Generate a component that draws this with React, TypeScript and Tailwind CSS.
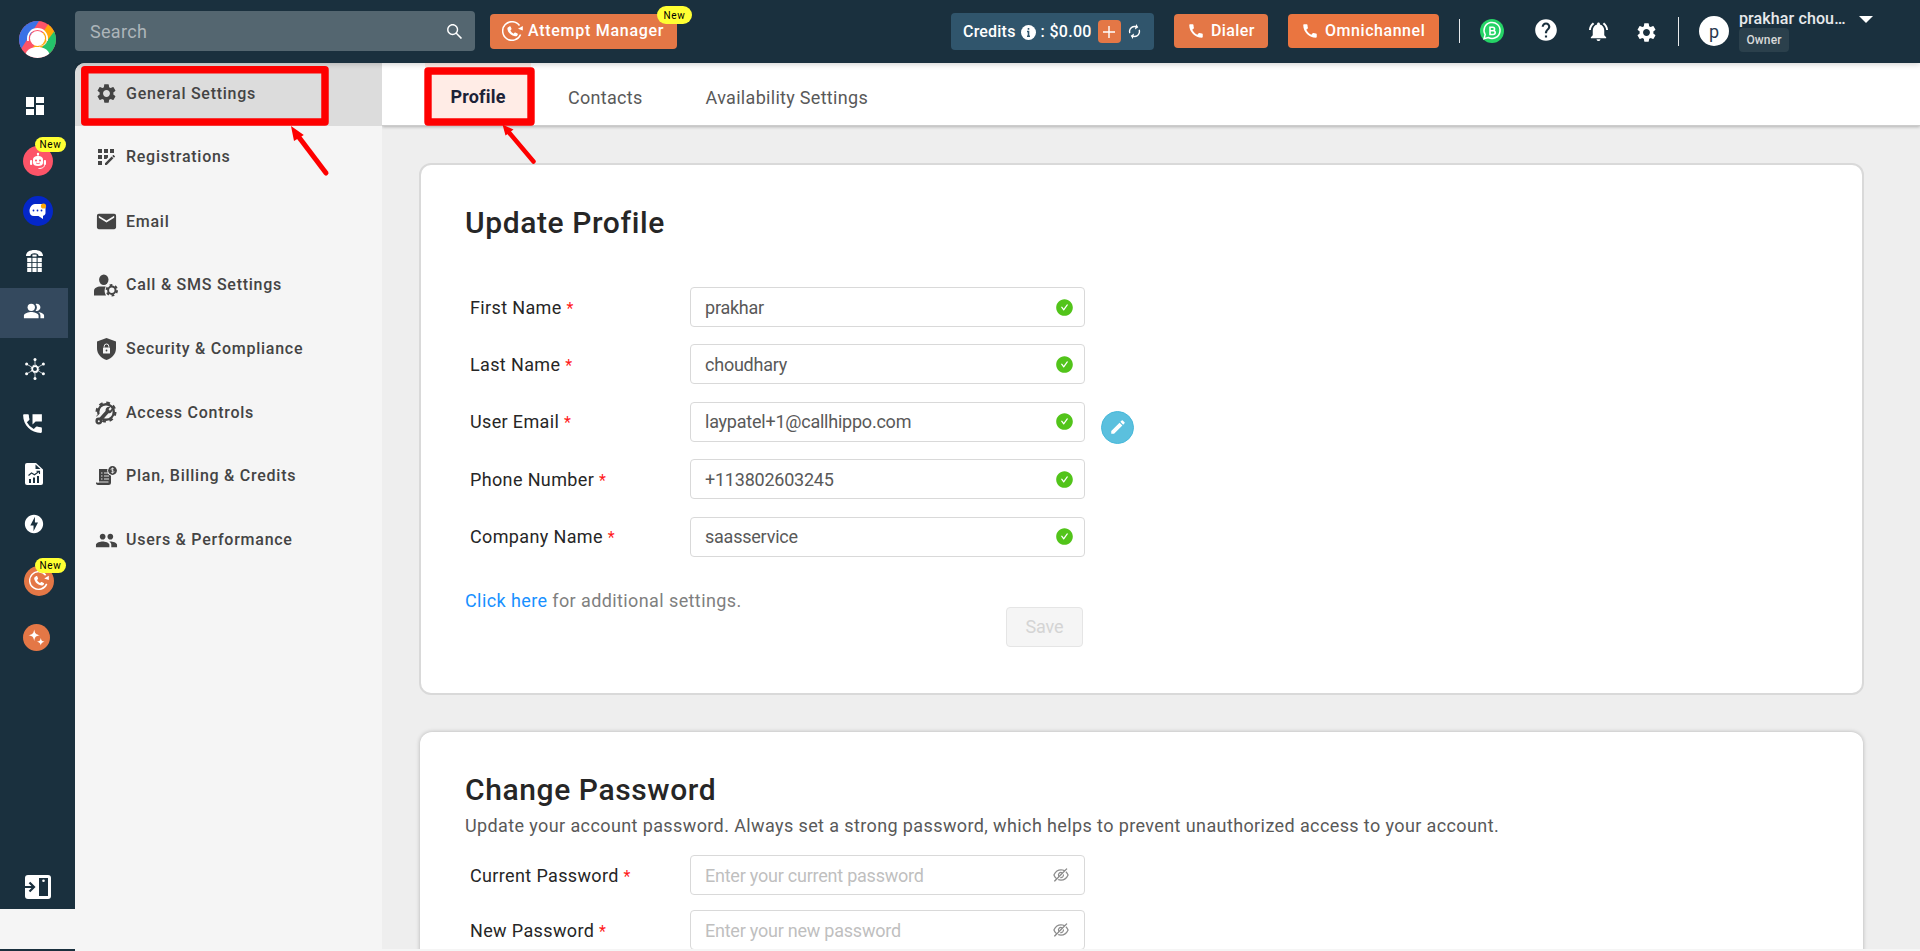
import { ReactNode } from 'react';
import {
  MdAppRegistration,
  MdAutorenew,
  MdCall,
  MdDashboard,
  MdEdit,
  MdEmail,
  MdHelp,
  MdNotificationsActive,
  MdOfflineBolt,
  MdPeople,
  MdPeopleAlt,
  MdPermPhoneMsg,
  MdSettings,
} from 'react-icons/md';
import { AiFillCheckCircle, AiOutlineEyeInvisible, AiOutlineSearch } from 'react-icons/ai';

interface MenuItem {
  label: string;
  icon: ReactNode;
}

interface FieldProps {
  label: string;
  value?: string;
  placeholder?: string;
  action?: ReactNode;
}

function LogoIcon() {
  return (
    <svg width="37" height="37" viewBox="0 0 37 37">
      <defs>
        <clipPath id="logo">
          <circle cx="18.5" cy="18.5" r="18.5" />
        </clipPath>
      </defs>
      <g clipPath="url(#logo)">
        <rect width="37" height="37" fill="#fd5468" />
        <path d="M0 0h20L2 28H0z" fill="#3b72e6" />
        <path d="M30 2L13 28h10L37 10z" fill="#ffa90a" />
        <path d="M37 8L22 28l10 9 5-4z" fill="#24c26a" />
        <path d="M6 34c2-6 7-8 12.500-8s10.500 2 12.500 8l-5 4H11z" fill="#fff" />
        <path d="M9 20c-1-8 4-12 9.500-12S29 12 28 20" fill="none" stroke="#fff" strokeWidth="1.800" />
        <circle cx="18.500" cy="17.500" r="7.500" fill="#fff" />
        <path d="M28 19c-1 5-4 6-8 6" fill="none" stroke="#ffd9a0" strokeWidth="1.200" />
      </g>
    </svg>
  );
}

function RobotIcon() {
  return (
    <svg width="16" height="18" viewBox="0 0 16 18">
      <path d="M8 1v4" stroke="#fff" strokeWidth="1" />
      <circle cx="8" cy="2" r="1.200" fill="#fff" />
      <path d="M3 8c0-3 2-4 5-4s5 1 5 4v3c0 2-2 3-5 3s-5-1-5-3z" fill="#fff" />
      <rect x="0" y="8" width="2.200" height="5" rx="1" fill="#fff" />
      <rect x="13.800" y="8" width="2.200" height="5" rx="1" fill="#fff" />
      <circle cx="6" cy="8.500" r="1" fill="#fd5468" />
      <circle cx="10" cy="8.500" r="1" fill="#fd5468" />
      <path d="M6 11q2 1.500 4 0" stroke="#fd5468" strokeWidth=".8" fill="none" />
      <path d="M14.500 13c0 2-2 3.500-6 3.500" stroke="#fff" strokeWidth="1" fill="none" />
    </svg>
  );
}

function ChatIcon() {
  return (
    <svg width="18" height="18" viewBox="0 0 18 18">
      <path d="M6 2h7c2 0 3.500 2 3.500 4v5c0 1.500-1 2.500-2.500 2.800V17l-4.500-3H5c-3 0-4.500-2-4.500-5s2-7 5.500-7z" fill="#fff" />
      <circle cx="14.500" cy="4" r="2.600" fill="#ffa90a" />
      <circle cx="4.500" cy="8.500" r=".9" fill="#0427c9" />
      <circle cx="8.500" cy="8.500" r=".9" fill="#0427c9" />
      <circle cx="12.500" cy="8.500" r=".9" fill="#0427c9" />
    </svg>
  );
}

function DialpadIcon() {
  return (
    <svg width="17" height="22" viewBox="0 0 17 22" fill="#fff">
      <path d="M0 6C0 2 3.500 0 8.500 0S17 2 17 6H12.500C12.500 4 11 3.200 8.500 3.200S4.500 4 4.500 6z" />
      {[7.8, 12.8, 17.8].map((y) =>
        [1.2, 6.4, 11.6].map((x) => <rect key={`${x}-${y}`} x={x} y={y} width="4.200" height="4.200" />),
      )}
      <rect x="6.400" y="4.600" width="4.200" height="2" />
    </svg>
  );
}

function HubIcon() {
  return (
    <svg width="20" height="22" viewBox="0 0 20 22">
      <path d="M10 1.500v19M1.500 6l17 10M18.500 6l-17 10" stroke="#fff" strokeWidth=".7" />
      <circle cx="10" cy="11" r="2.800" fill="#1a303e" stroke="#fff" strokeWidth="1.700" />
      <circle cx="10" cy="11" r="3.900" fill="none" stroke="#fff" strokeWidth=".9" strokeDasharray="1.600 1.460" />
      <g fill="#fff">
        <circle cx="10" cy="1.600" r="1.500" />
        <circle cx="10" cy="20.400" r="1.500" />
        <circle cx="1.600" cy="6" r="1.500" />
        <circle cx="18.400" cy="6" r="1.500" />
        <circle cx="1.600" cy="15.800" r="1.500" />
        <circle cx="18.400" cy="15.800" r="1.500" />
      </g>
    </svg>
  );
}

function ReportIcon() {
  return (
    <svg width="18" height="22" viewBox="0 0 18 22">
      <path d="M2 0h9l7 6.500V20a2 2 0 0 1-2 2H2a2 2 0 0 1-2-2V2a2 2 0 0 1 2-2z" fill="#fff" />
      <path d="M10.500 1.500V6h5z" fill="#1a303e" />
      <path d="M4 16h2v4H4zM8 14.500h2V20H8zM12 13h2v7h-2z" fill="#1a303e" />
      <path d="M3.500 12.500l3-2.500 3 1.800L14 8.500M11.500 8.300H14.500V11" fill="none" stroke="#1a303e" strokeWidth="1.100" />
    </svg>
  );
}

function RedialIcon({ size = 21 }: { size?: number }) {
  return (
    <svg width={size} height={size} viewBox="0 0 21 21">
      <path d="M18.600 13.500A9.300 9.300 0 1 1 17.500 4.500" fill="none" stroke="#fff" strokeWidth="1.500" />
      <path d="M20.800 5v4.500l-4.800-1.700z" fill="#fff" />
      <path
        d="M6.200 6.200l1.500-.9c.4-.2.800 0 1 .4l.8 2c.1.400 0 .7-.2.900l-.9.900c.8 1.500 1.800 2.500 3.200 3.200l.9-.9c.3-.3.600-.3.900-.2l2 .9c.4.200.5.600.4.900-.4 1.400-1.300 2-2.800 1.800C8.500 14.400 6 11.500 5.400 8c-.1-.8.200-1.500.8-1.800z"
        fill="#fff"
      />
    </svg>
  );
}

function SparkleIcon() {
  return (
    <svg width="17" height="17" viewBox="0 0 17 17" fill="#fff">
      <path d="M6.200.5c.7 4 1.700 5 5.700 5.800-4 .7-5 1.700-5.700 5.700C5.500 8 4.500 7 .5 6.300 4.500 5.500 5.500 4.500 6.200.5z" />
      <path d="M12.800 9c.4 2.500 1.200 3.300 3.700 3.700-2.500.5-3.300 1.300-3.700 3.800-.5-2.500-1.300-3.300-3.800-3.800 2.500-.4 3.300-1.200 3.800-3.700z" />
    </svg>
  );
}

function CollapseIcon() {
  return (
    <svg width="26" height="24" viewBox="0 0 26 24">
      <rect width="26" height="24" rx="3" fill="#fff" />
      <rect x="14" y="3" width="9" height="18" fill="#1a303e" />
      <circle cx="18.500" cy="5.800" r="1.300" fill="#fff" />
      <path d="M0 12h8M4.500 7.500L9 12l-4.500 4.500" fill="none" stroke="#1a303e" strokeWidth="2.200" />
    </svg>
  );
}

function UserGearIcon() {
  return (
    <svg width="24" height="23" viewBox="0 0 24 23" fill="#444">
      <ellipse cx="9.800" cy="5.700" rx="4.700" ry="5.200" />
      <path d="M0 21.500v-4.300C0 14 3 12.500 6.500 12.500h5.200c-1.600 2.700-1.500 6.300.3 9z" />
      <circle cx="17.800" cy="16.300" r="3.700" fill="none" stroke="#444" strokeWidth="2" />
      <circle cx="17.800" cy="16.300" r="5.200" fill="none" stroke="#444" strokeWidth="2" strokeDasharray="2.720 2.720" />
    </svg>
  );
}

function ShieldLockIcon() {
  return (
    <svg width="19" height="22" viewBox="0 0 19 22">
      <path d="M9.500 0L19 3.500V10c0 6-4 10-9.500 12C4 20 0 16 0 10V3.500z" fill="#444" />
      <path d="M7.200 9.500V8.300a2.300 2.300 0 0 1 4.600 0v1.200" fill="none" stroke="#f5f5f5" strokeWidth="1" />
      <rect x="6" y="9.500" width="7" height="6" rx=".6" fill="#f5f5f5" />
      <circle cx="9.500" cy="12.500" r=".9" fill="#444" />
    </svg>
  );
}

function AccessIcon() {
  return (
    <svg width="22" height="24" viewBox="0 0 22 24">
      <circle cx="11" cy="11" r="7.800" fill="none" stroke="#444" strokeWidth="2.400" />
      <circle cx="11" cy="11" r="9.400" fill="none" stroke="#444" strokeWidth="2.200" strokeDasharray="3.700 3.680" />
      <path d="M2.500 19L10 11.500" stroke="#f5f5f5" strokeWidth="6" />
      <path d="M4 20L13 10" stroke="#444" strokeWidth="3.600" strokeLinecap="round" />
      <path d="M10.500 9.500c0-3 2.500-4.500 5-3.500l-2.500 2.700 1.500 1.500 2.500-2.700c1 2.500-.8 5-3.500 4.800z" fill="#444" />
      <circle cx="3.800" cy="20" r="3.400" fill="#444" />
      <circle cx="3.800" cy="20.200" r="1" fill="#f5f5f5" />
    </svg>
  );
}

function BillingIcon() {
  return (
    <svg width="21" height="20" viewBox="0 0 21 20">
      <path d="M3 3h12v13.500A2.500 2.500 0 0 1 12.500 19H2a2 2 0 0 1-2-2.500h3z" fill="#444" />
      <path d="M5 7h1.500M8 7h5M5 10h1.500M8 10h5M5 13h1.500M8 13h5M1 16h11.500" stroke="#f5f5f5" strokeWidth=".9" />
      <circle cx="16.500" cy="4.500" r="5.300" fill="#f5f5f5" />
      <circle cx="16.500" cy="4.500" r="4.400" fill="#444" />
      <path d="M18 3c-1-1-3-.8-3 .3 0 1.500 3 .9 3 2.400 0 1.100-2 1.300-3 .3M16.500 1.500v6" fill="none" stroke="#f5f5f5" strokeWidth=".7" />
    </svg>
  );
}

function WhatsappBusinessIcon() {
  return (
    <svg width="24" height="24" viewBox="0 0 24 24" fill="none">
      <circle cx="12" cy="12" r="12" fill="#25d366" />
      <path d="M4 19.700l1.200-4.100A8 8 0 1 1 8.300 18.500z" stroke="#fff" strokeWidth="1.500" />
      <path d="M10 8.200h2.800a1.700 1.700 0 0 1 0 3.500H10zM10 11.700h3.300a1.900 1.900 0 0 1 0 3.800H10z" stroke="#fff" strokeWidth="1.600" />
    </svg>
  );
}

const menu: MenuItem[] = [
  { label: 'General Settings', icon: <MdSettings size={23} /> },
  { label: 'Registrations', icon: <MdAppRegistration size={24} /> },
  { label: 'Email', icon: <MdEmail size={23} /> },
  { label: 'Call & SMS Settings', icon: <UserGearIcon /> },
  { label: 'Security & Compliance', icon: <ShieldLockIcon /> },
  { label: 'Access Controls', icon: <AccessIcon /> },
  { label: 'Plan, Billing & Credits', icon: <BillingIcon /> },
  { label: 'Users & Performance', icon: <MdPeople size={23} /> },
];

function NewBadge({ className }: { className: string }) {
  return (
    <span className={`absolute flex items-center justify-center rounded-full bg-[#ffff33] text-black ${className}`}>
      New
    </span>
  );
}

function Rail() {
  return (
    <nav className="flex h-[909px] w-[75px] shrink-0 flex-col bg-[#1a303e] text-white">
      <div className="flex h-[78px] items-center justify-center">
        <LogoIcon />
      </div>
      <div className="flex h-14 w-[70px] items-center justify-center">
        <MdDashboard size={24} />
      </div>
      <div className="flex h-[54px] items-center pl-[23px]">
        <div className="relative flex size-[30px] items-center justify-center rounded-full bg-[#fd5468]">
          <RobotIcon />
          <NewBadge className="-top-[9px] left-3 h-[15px] w-[31px] text-[10px] tracking-[0.7px]" />
        </div>
      </div>
      <div className="flex h-[46px] items-center pl-[23px]">
        <div className="flex size-[30px] items-center justify-center rounded-full bg-[#0427c9]">
          <ChatIcon />
        </div>
      </div>
      <div className="flex h-[54px] w-[68px] items-center justify-center">
        <DialpadIcon />
      </div>
      <div className="flex h-[50px] w-[68px] items-center justify-center bg-[#34495e] pb-1">
        <MdPeopleAlt size={22} />
      </div>
      <div className="flex h-[62px] w-[70px] items-center justify-center">
        <HubIcon />
      </div>
      <div className="flex h-[46px] w-[65px] items-center justify-center">
        <MdPermPhoneMsg size={25} />
      </div>
      <div className="flex h-14 w-[68px] items-center justify-center">
        <ReportIcon />
      </div>
      <div className="flex h-11 w-[68px] items-center justify-center">
        <MdOfflineBolt size={22} />
      </div>
      <div className="flex h-[70px] items-center pl-6">
        <div className="relative flex size-[30px] items-center justify-center rounded-full bg-[#e47746]">
          <RedialIcon size={20} />
          <NewBadge className="-top-2 left-[11px] h-[15px] w-[31px] text-[10px] tracking-[0.7px]" />
        </div>
      </div>
      <div className="flex h-[42px] items-center pl-[23px]">
        <div className="flex size-[27px] items-center justify-center rounded-full bg-[#e47746]">
          <SparkleIcon />
        </div>
      </div>
      <div className="mt-auto mb-[10px] flex justify-center">
        <CollapseIcon />
      </div>
    </nav>
  );
}

function Header() {
  return (
    <header className="relative z-10 flex h-[63px] w-full shrink-0 items-start bg-[#1a303e] text-white shadow-[0_1px_6px_rgba(0,0,0,0.2)]">
      <div className="mt-[11px] flex h-10 w-[400px] items-center justify-between rounded bg-[#546670] pr-[11px] pl-[15px]">
        <span className="text-[18px] tracking-[0.3px] text-[#adb5ba]">Search</span>
        <AiOutlineSearch size={19} />
      </div>
      <div className="relative mt-[14px] ml-[15px] flex h-[35px] w-[187px] items-center rounded bg-[#e47746] pl-3">
        <RedialIcon />
        <span className="ml-[5px] pb-px text-[16px] font-medium tracking-[0.72px] whitespace-nowrap">Attempt Manager</span>
        <NewBadge className="-top-2 -right-[15px] h-[18px] w-[35px] text-[10px] tracking-[0.7px]" />
      </div>
      <div className="mt-[13px] ml-[274px] flex h-[37px] w-[203px] items-center rounded bg-[#30556c] pl-3 text-[16px] font-medium">
        <span className="tracking-[0.2px]">Credits</span>
        <svg className="mt-[1px] ml-[5px]" width="15" height="15" viewBox="0 0 15 15">
          <circle cx="7.500" cy="7.500" r="7.500" fill="#fff" />
          <path d="M7.500 3v1.800M6 6.500h1.500V11M6 11.300h3" fill="none" stroke="#30556c" strokeWidth="1.600" />
        </svg>
        <span className="ml-[5px] tracking-[0.3px] whitespace-pre">: $0.00</span>
        <div className="ml-[6px] flex size-[23px] items-center justify-center rounded bg-[#e47746]">
          <svg width="12" height="12" viewBox="0 0 12 12" stroke="#fff" strokeWidth="1.400">
            <path d="M6 0v12M0 6h12" />
          </svg>
        </div>
        <MdAutorenew className="ml-[5px] rotate-12" size={17} />
      </div>
      <div className="mt-[14px] ml-5 flex h-[34px] w-[94px] items-center rounded bg-[#e47746] pl-[13px]">
        <MdCall size={18} />
        <span className="ml-[6px] text-[16px] font-medium tracking-[0.4px]">Dialer</span>
      </div>
      <div className="mt-[14px] ml-5 flex h-[34px] w-[151px] items-center rounded bg-[#ea7540] pl-[13px]">
        <MdCall size={18} />
        <span className="ml-[6px] text-[16px] font-medium tracking-[0.55px]">Omnichannel</span>
      </div>
      <div className="mt-[19px] ml-5 h-6 w-px bg-white/90" />
      <div className="mt-[19px] ml-5">
        <WhatsappBusinessIcon />
      </div>
      <MdHelp className="mt-[17px] ml-[29px]" size={26} />
      <MdNotificationsActive className="mt-5 ml-[28px]" size={23} />
      <MdSettings className="mt-[21px] ml-[25px]" size={23} />
      <div className="mt-[17px] ml-[20px] h-[29px] w-px bg-white/90" />
      <div className="mt-4 ml-5 flex size-[30px] items-center justify-center rounded-full bg-white text-[18px] text-[#2a3850]">
        p
      </div>
      <div className="ml-[10px] w-[118px]">
        <div className="mt-[7px] h-5 text-[16px] leading-6 font-medium tracking-[0.12px] whitespace-nowrap text-white/90">prakhar chou…</div>
        <div className="mt-px flex h-6 w-[50px] items-center justify-center rounded bg-[#2b404c] text-[12px] font-medium tracking-[0.1px] text-[#d9d9d9]">
          Owner
        </div>
      </div>
      <svg className="mt-4 ml-[2px]" width="14" height="7" viewBox="0 0 14 7" fill="#fff">
        <path d="M0 0h14L7 7z" />
      </svg>
    </header>
  );
}

function SettingsMenu() {
  return (
    <aside className="h-full w-[307px] shrink-0 overflow-hidden rounded-tl-[10px] bg-[#f5f5f5]">
      {menu.map((item, index) => (
        <div
          key={item.label}
          className={`flex items-center pl-[19px] text-[#444] ${index === 0 ? 'h-[63px] bg-[#dcdcdc] pb-[2px]' : index === 1 ? 'h-[64.8px] pb-[2px]' : 'h-[63.7px] pb-[2px]'}`}
        >
          <span className="flex w-6 justify-center">{item.icon}</span>
          <span className="ml-2 text-[16px] font-medium tracking-[0.74px] whitespace-nowrap">{item.label}</span>
        </div>
      ))}
    </aside>
  );
}

function Field({ label, value, placeholder, action }: FieldProps) {
  return (
    <div className="flex h-10 items-center">
      <label className="w-[220px] text-[18px] tracking-[0.36px] text-[#262626]">
        {label} <span className="text-[16px] text-[#ff1a1a]">*</span>
      </label>
      <div className="flex h-10 w-[395px] items-center justify-between rounded border border-[#d9d9d9] bg-white pr-[10px] pl-[14px] text-[18px] tracking-[-0.23px]">
        {value ? <span className="text-[#595959]">{value}</span> : <span className="text-[#bfbfbf]">{placeholder}</span>}
        {value ? (
          <AiFillCheckCircle size={19} className="text-[#52c41a]" />
        ) : (
          <AiOutlineEyeInvisible size={18} className="mr-[4px] text-[#8c8c8c]" />
        )}
      </div>
      {action}
    </div>
  );
}

function EditButton() {
  return (
    <button className="mt-[11px] ml-4 flex size-[33px] items-center justify-center rounded-full border border-[#46b8da] bg-[#5bc0de] text-white">
      <MdEdit size={18} />
    </button>
  );
}

function Annotations() {
  return (
    <svg className="pointer-events-none absolute top-0 left-0 z-20" width="600" height="200" viewBox="0 0 600 200" fill="none">
      <g stroke="#fe0000" strokeLinejoin="round" strokeLinecap="round">
        <rect x="84.800" y="69.800" width="240.200" height="52.200" strokeWidth="7.500" />
        <rect x="428" y="71" width="103" height="51" strokeWidth="7.400" />
        <path d="M298 136L326 173" strokeWidth="5" />
        <path d="M509 132.500L533.500 161.500" strokeWidth="4.500" />
      </g>
      <path d="M291 126l12.800 9-9.800 6zM502.500 124.500l11 5-8 6z" fill="#fe0000" />
    </svg>
  );
}

export default function App() {
  return (
    <div className="relative flex h-[951px] w-[1920px] overflow-hidden bg-[#f5f5f5] font-['Roboto',sans-serif] leading-normal">
      <div className="relative z-20 flex h-full w-[75px] shrink-0 flex-col justify-between">
        <Rail />
        <div className="h-[2px] bg-[#1a303e]" />
      </div>
      <div className="flex h-[949px] w-[1845px] flex-col">
        <Header />
        <div className="flex h-[886px] bg-[linear-gradient(90deg,#1a303e_20px,#eee_20px)]">
          <SettingsMenu />
          <main className="flex h-full w-[1538px] flex-col overflow-hidden bg-[#eee]">
            <div className="flex h-[63px] shrink-0 items-stretch border-b border-[#ccc] bg-white pl-[43px] text-[18px] text-[#595959] shadow-[0_1px_3px_rgba(0,0,0,0.25)]">
              <div className="flex w-[106px] items-center justify-center bg-[#ffece6] pt-1 font-bold tracking-[0.2px] text-[#1c2237]">Profile</div>
              <div className="flex items-center pt-[6px] pl-[37px] tracking-[0.3px]">Contacts</div>
              <div className="flex items-center pt-[6px] pl-[63px] tracking-[0.3px]">Availability Settings</div>
            </div>
            <section className="mt-[37px] ml-[37px] h-[532px] w-[1445px] shrink-0 rounded-xl border-2 border-[#d9d9d9] bg-white pl-11">
              <h2 className="mt-[35px] h-[45px] text-[30px] font-medium tracking-[0.6px] text-[#262626]">Update Profile</h2>
              <div className="mt-[42px] flex flex-col gap-[17.4px] pl-[5px]">
                <Field label="First Name" value="prakhar" />
                <Field label="Last Name" value="choudhary" />
                <Field label="User Email" value="laypatel+1@callhippo.com" action={<EditButton />} />
                <Field label="Phone Number" value="+113802603245" />
                <Field label="Company Name" value="saasservice" />
              </div>
              <div className="mt-[30px] flex w-[618px] items-start justify-between text-[18px]">
                <p className="tracking-[0.4px] text-[#7f7f7f]">
                  <a className="text-[#1890ff]">Click here</a> for additional settings.
                </p>
                <button className="mt-5 h-10 w-[77px] rounded border border-[#e5e5e5] bg-[#f5f5f5] tracking-[-0.1px] text-[#d4d4d4]">Save</button>
              </div>
            </section>
            <section className="mt-[37px] ml-[38px] h-[400px] w-[1443px] shrink-0 rounded-xl bg-white pl-[45px] shadow-[0_0_4px_rgba(0,0,0,0.25)]">
              <h2 className="mt-[35px] h-[45px] text-[30px] font-medium tracking-[0.6px] text-[#262626]">Change Password</h2>
              <p className="text-[18px] tracking-[0.39px] text-[#595959]">
                Update your account password. Always set a strong password, which helps to prevent unauthorized access to your account.
              </p>
              <div className="mt-4 flex flex-col gap-[15px] pl-[5px]">
                <Field label="Current Password" placeholder="Enter your current password" />
                <Field label="New Password" placeholder="Enter your new password" />
              </div>
            </section>
          </main>
        </div>
      </div>
      <Annotations />
    </div>
  );
}
